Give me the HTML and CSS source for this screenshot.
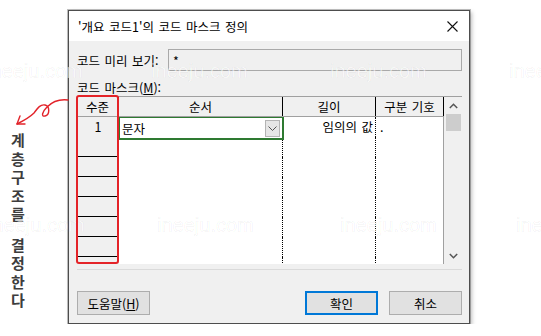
FILE: index.html
```html
<!DOCTYPE html>
<html lang="ko">

<head>
    <meta charset="UTF-8">
    <title>코드 마스크 정의</title>
    <link rel="stylesheet" href="styles.css">
</head>

<body>
    <div class="page">
        <!-- Left annotation: arrow + vertical note -->
        <aside class="note">
            <svg class="note-arrow" width="70" height="130" viewBox="0 10 70 130">
                <path d="M68,100 C60,99 52,102 47,107 C42,112 41,117 45,116 C50,115 50,106 45,105 C40,104 37,109 34,113 C29,118 23,121 17,124"
                    fill="none" stroke="#e2232a" stroke-width="1.4" stroke-linecap="round" />
                <path d="M20,116 L17,124 L25,124" fill="none" stroke="#e2232a" stroke-width="1.4"
                    stroke-linecap="round" stroke-linejoin="round" />
            </svg>
            <div class="note-text">
                <span>계</span><span>층</span><span>구</span><span>조</span><span>를</span>
            </div>
            <div class="note-text note-gap">
                <span>결</span><span>정</span><span>한</span><span>다</span>
            </div>
        </aside>

        <!-- Dialog window -->
        <div class="dialog">
            <div class="titlebar">
                <span>'개요 코드1'의 코드 마스크 정의</span>
                <svg class="close" width="11" height="11" viewBox="0 0 11 11">
                    <path d="M0.5,0.5 L10.5,10.5 M10.5,0.5 L0.5,10.5" stroke="#111" stroke-width="1.1" />
                </svg>
            </div>

            <div class="dlg-body">
                <div class="preview-row">
                    <label class="preview-label">코드 미리 보기:</label>
                    <div class="preview-box">*</div>
                </div>

                <div class="mask-label">코드 마스크(<u>M</u>):</div>

                <div class="grid">
                    <div class="grid-main">
                        <div class="grid-head">
                            <div class="hcell">수준</div>
                            <div class="hcell">순서</div>
                            <div class="hcell">길이</div>
                            <div class="hcell">구분 기호</div>
                        </div>
                        <div class="grid-rows">
                            <div class="row">
                                <div class="cell lvl">1</div>
                                <div class="cell seq selected">
                                    <span>문자</span>
                                    <span class="drop">
                                        <svg width="9" height="5" viewBox="0 0 9 5">
                                            <path d="M0.5,0.5 L4.5,4.5 L8.5,0.5" fill="none" stroke="#555" />
                                        </svg>
                                    </span>
                                </div>
                                <div class="cell len">임의의 값</div>
                                <div class="cell sep">.</div>
                            </div>
                            <div class="row"><div class="cell lvl"></div><div class="cell seq"></div><div class="cell len"></div><div class="cell sep"></div></div>
                            <div class="row"><div class="cell lvl"></div><div class="cell seq"></div><div class="cell len"></div><div class="cell sep"></div></div>
                            <div class="row"><div class="cell lvl"></div><div class="cell seq"></div><div class="cell len"></div><div class="cell sep"></div></div>
                            <div class="row"><div class="cell lvl"></div><div class="cell seq"></div><div class="cell len"></div><div class="cell sep"></div></div>
                            <div class="row"><div class="cell lvl"></div><div class="cell seq"></div><div class="cell len"></div><div class="cell sep"></div></div>
                            <div class="row"><div class="cell lvl"></div><div class="cell seq"></div><div class="cell len"></div><div class="cell sep"></div></div>
                            <div class="row"><div class="cell lvl"></div><div class="cell seq"></div><div class="cell len"></div><div class="cell sep"></div></div>
                        </div>
                        <!-- red highlight around the level column -->
                        <div class="level-mark"></div>
                    </div>
                    <div class="scrollbar">
                        <div class="sb-btn">
                            <svg width="9" height="6" viewBox="0 0 9 6">
                                <path d="M0.8,5 L4.5,1.3 L8.2,5" fill="none" stroke="#555" stroke-width="1.5" />
                            </svg>
                        </div>
                        <div class="sb-thumb"></div>
                        <div class="sb-track"></div>
                        <div class="sb-btn">
                            <svg width="9" height="6" viewBox="0 0 9 6">
                                <path d="M0.8,1 L4.5,4.7 L8.2,1" fill="none" stroke="#555" stroke-width="1.5" />
                            </svg>
                        </div>
                    </div>
                </div>

                <div class="divider"></div>

                <div class="buttons">
                    <button class="btn">도움말(<u>H</u>)</button>
                    <div class="btn-group">
                        <button class="btn btn-default">확인</button>
                        <button class="btn">취소</button>
                    </div>
                </div>
            </div>
        </div>
    </div>

    <!-- faint watermarks -->
    <div class="watermarks">
        <span class="wm wm1">ineeju.com</span>
        <span class="wm wm2">ineeju.com</span>
        <span class="wm wm3">ineeju.com</span>
        <span class="wm wm4">ineeju.com</span>
        <span class="wm wm5">ineeju.com</span>
        <span class="wm wm6">ineeju.com</span>
        <span class="wm wm7">ineeju.com</span>
        <span class="wm wm8">ineeju.com</span>
    </div>
</body>

</html>
```

FILE: styles.css
```css
/* Page */
body {
    margin: 0;
    background-color: #ffffff;
    font-family: "Noto Sans CJK KR", "Noto Sans", sans-serif;
    font-size: 12.5px;
    word-spacing: 1px;
    color: #000;
    overflow: hidden;
}

.page {
    display: flex;
    padding-top: 10px;
}

/* Left annotation */
.note {
    position: relative;
    width: 68px;
    padding-top: 121px;
}

.note-arrow {
    position: absolute;
    left: 0;
    top: 0;
}

.note-text {
    display: flex;
    flex-direction: column;
    width: 36px;
    align-items: center;
    font-size: 15px;
    font-weight: 700;
    line-height: 18.5px;
    color: #3d3d3d;
}

.note-gap {
    margin-top: 12px;
}

/* Dialog window */
.dialog {
    width: 402px;
    height: 314px;
    box-sizing: border-box;
    border: 1px solid #4d4d4d;
    box-shadow: 0 0 0 1px rgba(0, 0, 0, 0.25), 2px 2px 4px rgba(0, 0, 0, 0.25);
    background-color: #f0f0f0;
    display: flex;
    flex-direction: column;
}

.titlebar {
    height: 30px;
    background-color: #ffffff;
    display: flex;
    align-items: center;
    justify-content: space-between;
    padding: 0 11px 0 9px;
}

.close {
    display: block;
}

.dlg-body {
    padding: 0 7px 0 8px;
}

/* Preview line */
.preview-row {
    display: flex;
    align-items: center;
    margin-top: 8px;
}

.preview-label {
    width: 91px;
}

.preview-box {
    flex: 1;
    height: 22px;
    box-sizing: border-box;
    border: 1px solid #a9a9a9;
    background-color: #f0f0f0;
    padding: 3px 0 0 4px;
    line-height: 16px;
}

.mask-label {
    margin-top: 8px;
    line-height: 17px;
}

/* Mask grid */
.grid {
    display: flex;
    height: 168px;
    border-top: 1px solid #a0a0a0;
    box-sizing: border-box;
}

.grid-main {
    position: relative;
    width: 367px;
    display: flex;
    flex-direction: column;
    background-color: #ffffff;
}

.grid-head,
.row {
    display: grid;
    grid-template-columns: 42px 164px 93px 68px;
}

.grid-head {
    height: 20px;
    box-sizing: border-box;
    background-color: #f0f0f0;
    border-bottom: 1px solid #a0a0a0;
}

.hcell {
    text-align: center;
    line-height: 19px;
    border-right: 1px solid #000;
}

.grid-rows {
    flex: 1;
    overflow: hidden;
}

.row {
    height: 20px;
}

.cell {
    box-sizing: border-box;
    line-height: 19px;
}

.lvl {
    background-color: #f0f0f0;
    border-bottom: 1px solid #000;
    text-align: center;
}

.seq,
.len {
    border-right: 1px dotted #000;
}

.sep {
    border-right: 1px solid #a0a0a0;
    padding-left: 4px;
}

.len {
    text-align: right;
    padding-right: 2px;
}

.seq {
    display: flex;
    align-items: center;
    justify-content: space-between;
    padding: 0 2px 0 3px;
}

.selected {
    outline: 2px solid #2e7a31;
    outline-offset: -1px;
    position: relative;
    z-index: 1;
    height: 22px;
}

.drop {
    width: 15px;
    height: 17px;
    box-sizing: border-box;
    border: 1px solid #b4b4b4;
    background-color: #e6e6e6;
    display: flex;
    align-items: center;
    justify-content: center;
}

.level-mark {
    position: absolute;
    left: -1px;
    top: -2px;
    width: 43px;
    height: 169px;
    box-sizing: border-box;
    border: 2px solid #e42328;
    border-radius: 3px;
    z-index: 2;
}

/* Scrollbar */
.scrollbar {
    width: 18px;
    background-color: #f0f0f0;
    display: flex;
    flex-direction: column;
    align-items: center;
}

.sb-btn {
    height: 17px;
    width: 17px;
    display: flex;
    align-items: center;
    justify-content: center;
}

.sb-thumb {
    width: 15px;
    height: 17px;
    background-color: #cdcdcd;
}

.sb-track {
    flex: 1;
}

.divider {
    margin-top: 5px;
    height: 1px;
    background-color: #dadada;
}

/* Bottom buttons */
.buttons {
    display: flex;
    margin-top: 21px;
}

.btn-group {
    display: flex;
    gap: 11px;
    margin-left: auto;
}

.btn {
    width: 73px;
    height: 24px;
    box-sizing: border-box;
    border: 1px solid #adadad;
    background-color: #e1e1e1;
    font-family: inherit;
    font-size: 12.5px;
    color: #000;
    padding: 0;
}

.btn-default {
    border: 2px solid #0078d7;
}

/* Watermarks */
.watermarks {
    position: absolute;
    left: 0;
    top: 0;
    width: 541px;
    height: 336px;
    pointer-events: none;
    overflow: hidden;
}

.wm {
    position: absolute;
    font-family: "Liberation Sans", sans-serif;
    font-size: 20px;
    word-spacing: 0;
    color: rgba(255, 255, 255, 0.55);
    -webkit-text-stroke: 0.6px rgba(0, 0, 0, 0.07);
}

.wm1 { left: -14px; top: 60px; }
.wm2 { left: 151px; top: 60px; }
.wm3 { left: 330px; top: 60px; }
.wm4 { left: 509px; top: 60px; }
.wm5 { left: -12px; top: 214px; }
.wm6 { left: 157px; top: 214px; }
.wm7 { left: 340px; top: 214px; }
.wm8 { left: 516px; top: 214px; }
```
